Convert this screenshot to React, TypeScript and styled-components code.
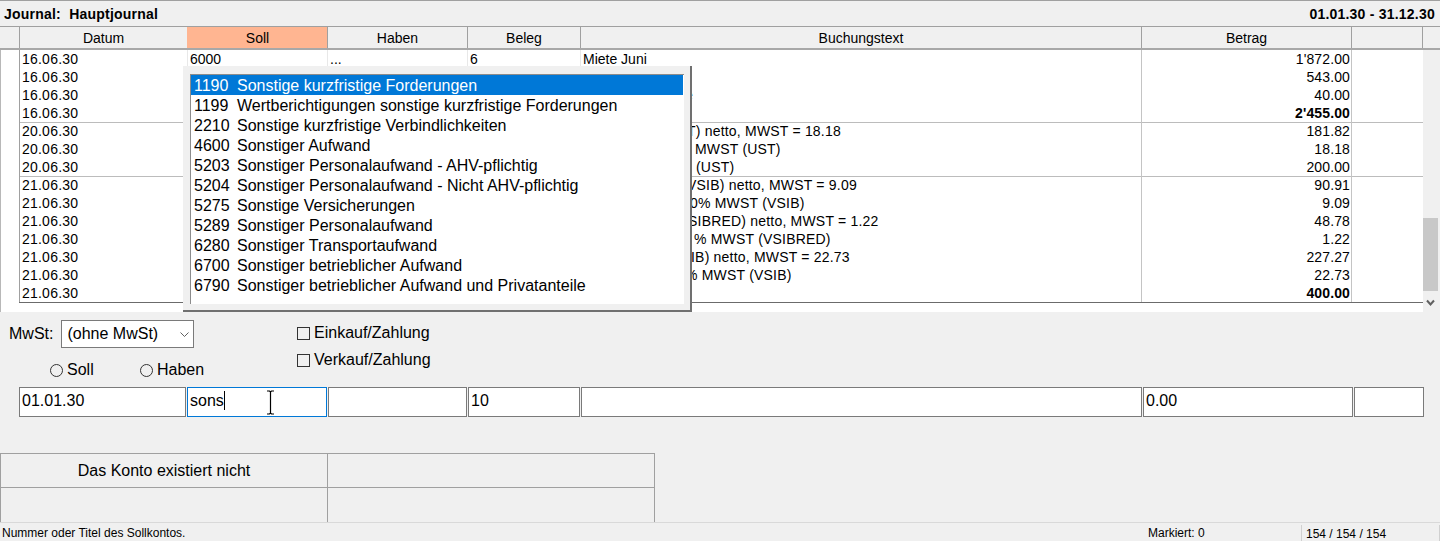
import React from "react";
import styled, { createGlobalStyle } from "styled-components";

const Global = createGlobalStyle`
  html, body { margin: 0; padding: 0; background: #f0f0f0; }
  * { box-sizing: border-box; }
`;

const Page = styled.div`
  position: relative;
  width: 1440px;
  height: 541px;
  overflow: hidden;
  display: flex;
  flex-direction: column;
  background: #f0f0f0;
  color: #000;
  font-family: "Liberation Sans", Arial, sans-serif;
  font-size: 14px;
`;

const TitleBar = styled.div`
  height: 27px;
  flex: none;
  display: flex;
  justify-content: space-between;
  align-items: center;
  padding: 0 5px 0 4px;
  border-top: 1px solid #a0a0a0;
  border-bottom: 1px solid #a0a0a0;
  font-weight: bold;
  letter-spacing: 0.22px;
  white-space: pre;
`;

const HeaderRow = styled.div`
  height: 23px;
  flex: none;
  display: grid;
  grid-template-columns: 19px 168px 140px 140px 113px 561px 210px 71px 18px;
  border-bottom: 2px solid #a8a8a8;
`;

const HeaderCell = styled.div<{ $active?: boolean }>`
  display: flex;
  align-items: center;
  justify-content: center;
  border-left: 1px solid ${(p) => (p.$active ? "#ffb591" : "#a0a0a0")};
  background: ${(p) => (p.$active ? "#ffb591" : "#f0f0f0")};
  padding-top: 1px;
  &:first-child { border-left: 0; }
`;

const TableArea = styled.div`
  height: 262px;
  flex: none;
  display: flex;
`;

const Rows = styled.div`
  width: 1423px;
  flex: none;
  background: #fff;
  border-left: 1px solid #b8b8b8;
`;

const Row = styled.div<{ $separated?: boolean }>`
  height: 18px;
  display: grid;
  grid-template-columns: 18px 168px 140px 140px 113px 561px 210px 72px;
  line-height: 18px;
  white-space: nowrap;
  box-shadow: ${(p) => (p.$separated ? "inset 0 1px 0 #bcbcbc" : "none")};
`;

const Gutter = styled.div`
  background: #fff;
`;

const Cell = styled.div<{ $tone?: "strong" | "mid" | "faint" }>`
  padding-left: 2px;
  border-left: 1px solid
    ${(p) => (p.$tone === "strong" ? "#a0a0a0" : p.$tone === "mid" ? "#c4c4c4" : "#e8e8e8")};
`;

const DateCell = styled(Cell)`
  letter-spacing: 0.22px;
`;

const TextCell = styled(Cell)<{ $lead?: number }>`
  padding-left: ${(p) => 2 + (p.$lead ?? 0)}px;
  letter-spacing: ${(p) => (p.$lead ? "0.2px" : "0")};
`;

const AmountCell = styled(Cell)<{ $total?: boolean }>`
  padding-left: 0;
  padding-right: 1px;
  text-align: right;
  letter-spacing: 0.12px;
  font-weight: ${(p) => (p.$total ? "bold" : "normal")};
`;

const TableEnd = styled.div`
  height: 10px;
  margin-left: 18px;
  border-top: 1px solid #6b6b6b;
`;

const ScrollBar = styled.div`
  width: 17px;
  flex: none;
  display: flex;
  flex-direction: column;
  background: #f0f0f0;
`;

const ScrollThumb = styled.div`
  width: 15px;
  height: 73px;
  margin-top: 168px;
  background: #c8c8c8;
`;

const ScrollDown = styled.svg`
  width: 9px;
  height: 8px;
  margin: 8px 0 0 3px;
`;

const Popup = styled.div`
  position: absolute;
  left: 183px;
  top: 66px;
  width: 509px;
  height: 246px;
  padding: 8px 6px 6px 7px;
  background: #f0f0f0;
  border-right: 2px solid #707070;
  border-bottom: 2px solid #707070;
`;

const PopupList = styled.div`
  width: 494px;
  height: 230px;
  padding-right: 1px;
  background: #fff;
  border-top: 1px solid #8c8c8c;
  border-left: 1px solid #8c8c8c;
  font-size: 16px;
`;

const PopupItem = styled.div<{ $selected?: boolean }>`
  height: 20px;
  display: flex;
  padding: 1px 0 0 3px;
  line-height: 20px;
  white-space: nowrap;
  background: ${(p) => (p.$selected ? "#0078d7" : "transparent")};
  color: ${(p) => (p.$selected ? "#fff" : "#000")};
`;

const AccountNumber = styled.span`
  width: 43px;
  flex: none;
`;

const FormTop = styled.div`
  height: 75px;
  flex: none;
  display: flex;
  font-size: 16px;
  white-space: nowrap;
`;

const VatBlock = styled.div`
  width: 297px;
  flex: none;
  padding: 8px 0 0 9px;
`;

const VatRow = styled.div`
  display: flex;
  align-items: center;
  gap: 8px;
  height: 28px;
`;

const Select = styled.div`
  width: 133px;
  height: 28px;
  display: flex;
  align-items: center;
  justify-content: space-between;
  padding: 0 4px 0 5px;
  background: #fff;
  border: 1px solid #7a7a7a;
`;

const Chevron = styled.svg`
  width: 9px;
  height: 5px;
`;

const RadioRow = styled.div`
  display: flex;
  margin-top: 13px;
  padding-left: 41px;
  height: 18px;
`;

const RadioOption = styled.div<{ $width: number }>`
  width: ${(p) => p.$width}px;
  display: flex;
  align-items: center;
  gap: 4px;
`;

const RadioMark = styled.span`
  width: 13px;
  height: 13px;
  border: 1px solid #333;
  border-radius: 50%;
`;

const CheckColumn = styled.div`
  display: flex;
  flex-direction: column;
  gap: 9px;
  padding-top: 12px;
`;

const CheckOption = styled.div`
  height: 18px;
  display: flex;
  align-items: center;
  gap: 4px;
`;

const CheckMark = styled.span`
  width: 13px;
  height: 13px;
  border: 1px solid #333;
`;

const EntryRow = styled.div`
  height: 30px;
  flex: none;
  display: flex;
  gap: 1px;
  padding-left: 19px;
  font-size: 16px;
`;

const Field = styled.div<{ $width: number; $focused?: boolean }>`
  position: relative;
  width: ${(p) => p.$width}px;
  padding-left: 2px;
  line-height: 26px;
  background: #fff;
  border: 1px solid ${(p) => (p.$focused ? "#0078d7" : "#7a7a7a")};
`;

const Caret = styled.span`
  display: inline-block;
  width: 1px;
  height: 19px;
  vertical-align: -4px;
  background: #000;
`;

const IBeam = styled.svg`
  position: absolute;
  left: 78px;
  top: 2px;
  width: 9px;
  height: 25px;
`;

const MessageGrid = styled.div`
  width: 655px;
  height: 69px;
  flex: none;
  margin-top: 36px;
  display: grid;
  grid-template-columns: 327px 328px;
  grid-template-rows: 33px 35px;
  border-top: 1px solid #a0a0a0;
  font-size: 16px;
`;

const MessageCell = styled.div<{ $right?: boolean; $lower?: boolean }>`
  display: flex;
  align-items: center;
  justify-content: center;
  padding-top: 1px;
  border-left: 1px solid #a0a0a0;
  border-top: ${(p) => (p.$lower ? "1px solid #a0a0a0" : "0")};
  border-right: ${(p) => (p.$right ? "1px solid #a0a0a0" : "0")};
`;

const StatusBar = styled.div`
  height: 19px;
  flex: none;
  display: flex;
  border-top: 1px solid #d9d9d9;
  font-size: 12px;
  line-height: 20px;
  white-space: nowrap;
`;

const StatusMessage = styled.div`
  width: 1148px;
  flex: none;
  padding-left: 2px;
`;

const StatusMarked = styled.div`
  width: 153px;
  flex: none;
`;

const StatusCount = styled.div`
  width: 139px;
  flex: none;
  margin-top: 2px;
  padding-left: 4px;
  line-height: 18px;
  border-left: 1px solid #d0d0d0;
  border-right: 1px solid #d0d0d0;
`;

type RowData = {
  date: string;
  soll?: string;
  haben?: string;
  beleg?: string;
  text?: string;
  lead?: number;
  amount: string;
  total?: boolean;
  separated?: boolean;
};

const rows: RowData[] = [
  { date: "16.06.30", soll: "6000", haben: "...", beleg: "6", text: "Miete Juni", amount: "1'872.00" },
  { date: "16.06.30", amount: "543.00" },
  { date: "16.06.30", text: "e", lead: 102, amount: "40.00" },
  { date: "16.06.30", amount: "2'455.00", total: true },
  { date: "20.06.30", text: "T) netto, MWST = 18.18", lead: 104, amount: "181.82", separated: true },
  { date: "20.06.30", text: "MWST (UST)", lead: 112, amount: "18.18" },
  { date: "20.06.30", text: "(UST)", lead: 113, amount: "200.00" },
  { date: "21.06.30", text: "VSIB) netto, MWST = 9.09", lead: 104, amount: "90.91", separated: true },
  { date: "21.06.30", text: "0% MWST (VSIB)", lead: 107, amount: "9.09" },
  { date: "21.06.30", text: "SIBRED) netto, MWST = 1.22", lead: 105, amount: "48.78" },
  { date: "21.06.30", text: "% MWST (VSIBRED)", lead: 111, amount: "1.22" },
  { date: "21.06.30", text: "IB) netto, MWST = 22.73", lead: 108, amount: "227.27" },
  { date: "21.06.30", text: "% MWST (VSIB)", lead: 102, amount: "22.73" },
  { date: "21.06.30", amount: "400.00", total: true },
];

const accounts = [
  ["1190", "Sonstige kurzfristige Forderungen"],
  ["1199", "Wertberichtigungen sonstige kurzfristige Forderungen"],
  ["2210", "Sonstige kurzfristige Verbindlichkeiten"],
  ["4600", "Sonstiger Aufwand"],
  ["5203", "Sonstiger Personalaufwand - AHV-pflichtig"],
  ["5204", "Sonstiger Personalaufwand - Nicht AHV-pflichtig"],
  ["5275", "Sonstige Versicherungen"],
  ["5289", "Sonstiger Personalaufwand"],
  ["6280", "Sonstiger Transportaufwand"],
  ["6700", "Sonstiger betrieblicher Aufwand"],
  ["6790", "Sonstiger betrieblicher Aufwand und Privatanteile"],
];

const headers = ["Datum", "Soll", "Haben", "Beleg", "Buchungstext", "Betrag", ""];

export default function App() {
  return (
    <Page>
      <Global />
      <TitleBar>
        <span>{"Journal:  Hauptjournal"}</span>
        <span>01.01.30 - 31.12.30</span>
      </TitleBar>
      <HeaderRow>
        <HeaderCell />
        {headers.map((h, i) => (
          <HeaderCell key={i} $active={h === "Soll"}>{h}</HeaderCell>
        ))}
        <HeaderCell />
      </HeaderRow>
      <TableArea>
        <Rows>
          {rows.map((r, i) => (
            <Row key={i} $separated={r.separated}>
              <Gutter />
              <DateCell $tone="strong">{r.date}</DateCell>
              <Cell>{r.soll}</Cell>
              <Cell>{r.haben}</Cell>
              <Cell>{r.beleg}</Cell>
              <TextCell $lead={r.lead}>{r.text}</TextCell>
              <AmountCell $tone="mid" $total={r.total}>{r.amount}</AmountCell>
              <Cell $tone="mid" />
            </Row>
          ))}
          <TableEnd />
        </Rows>
        <ScrollBar>
          <ScrollThumb />
          <ScrollDown viewBox="0 0 9 8">
            <path d="M1 1.5 L4.5 5.5 L8 1.5" fill="none" stroke="#606060" strokeWidth="2" />
          </ScrollDown>
        </ScrollBar>
      </TableArea>
      <Popup>
        <PopupList>
          {accounts.map(([no, title], i) => (
            <PopupItem key={no} $selected={i === 0}>
              <AccountNumber>{no}</AccountNumber>
              {title}
            </PopupItem>
          ))}
        </PopupList>
      </Popup>
      <FormTop>
        <VatBlock>
          <VatRow>
            <span>MwSt:</span>
            <Select>
              <span>(ohne MwSt)</span>
              <Chevron viewBox="0 0 9 5">
                <path d="M0.5 0.5 L4.5 4.5 L8.5 0.5" fill="none" stroke="#606060" strokeWidth="1" />
              </Chevron>
            </Select>
          </VatRow>
          <RadioRow>
            <RadioOption $width={90}><RadioMark />Soll</RadioOption>
            <RadioOption $width={80}><RadioMark />Haben</RadioOption>
          </RadioRow>
        </VatBlock>
        <CheckColumn>
          <CheckOption><CheckMark />Einkauf/Zahlung</CheckOption>
          <CheckOption><CheckMark />Verkauf/Zahlung</CheckOption>
        </CheckColumn>
      </FormTop>
      <EntryRow>
        <Field $width={167}>01.01.30</Field>
        <Field $width={140} $focused>
          sons<Caret />
          <IBeam viewBox="0 0 9 25">
            <path d="M1 1 H3.5 L4.5 2 L5.5 1 H8 M4.5 2 V23 M1 24 H3.5 L4.5 23 L5.5 24 H8" fill="none" stroke="#000" strokeWidth="1.2" />
          </IBeam>
        </Field>
        <Field $width={139} />
        <Field $width={112}>10</Field>
        <Field $width={561} />
        <Field $width={210}>0.00</Field>
        <Field $width={70} />
      </EntryRow>
      <MessageGrid>
        <MessageCell>Das Konto existiert nicht</MessageCell>
        <MessageCell $right />
        <MessageCell $lower />
        <MessageCell $lower $right />
      </MessageGrid>
      <StatusBar>
        <StatusMessage>Nummer oder Titel des Sollkontos.</StatusMessage>
        <StatusMarked>Markiert: 0</StatusMarked>
        <StatusCount>154 / 154 / 154</StatusCount>
      </StatusBar>
    </Page>
  );
}
